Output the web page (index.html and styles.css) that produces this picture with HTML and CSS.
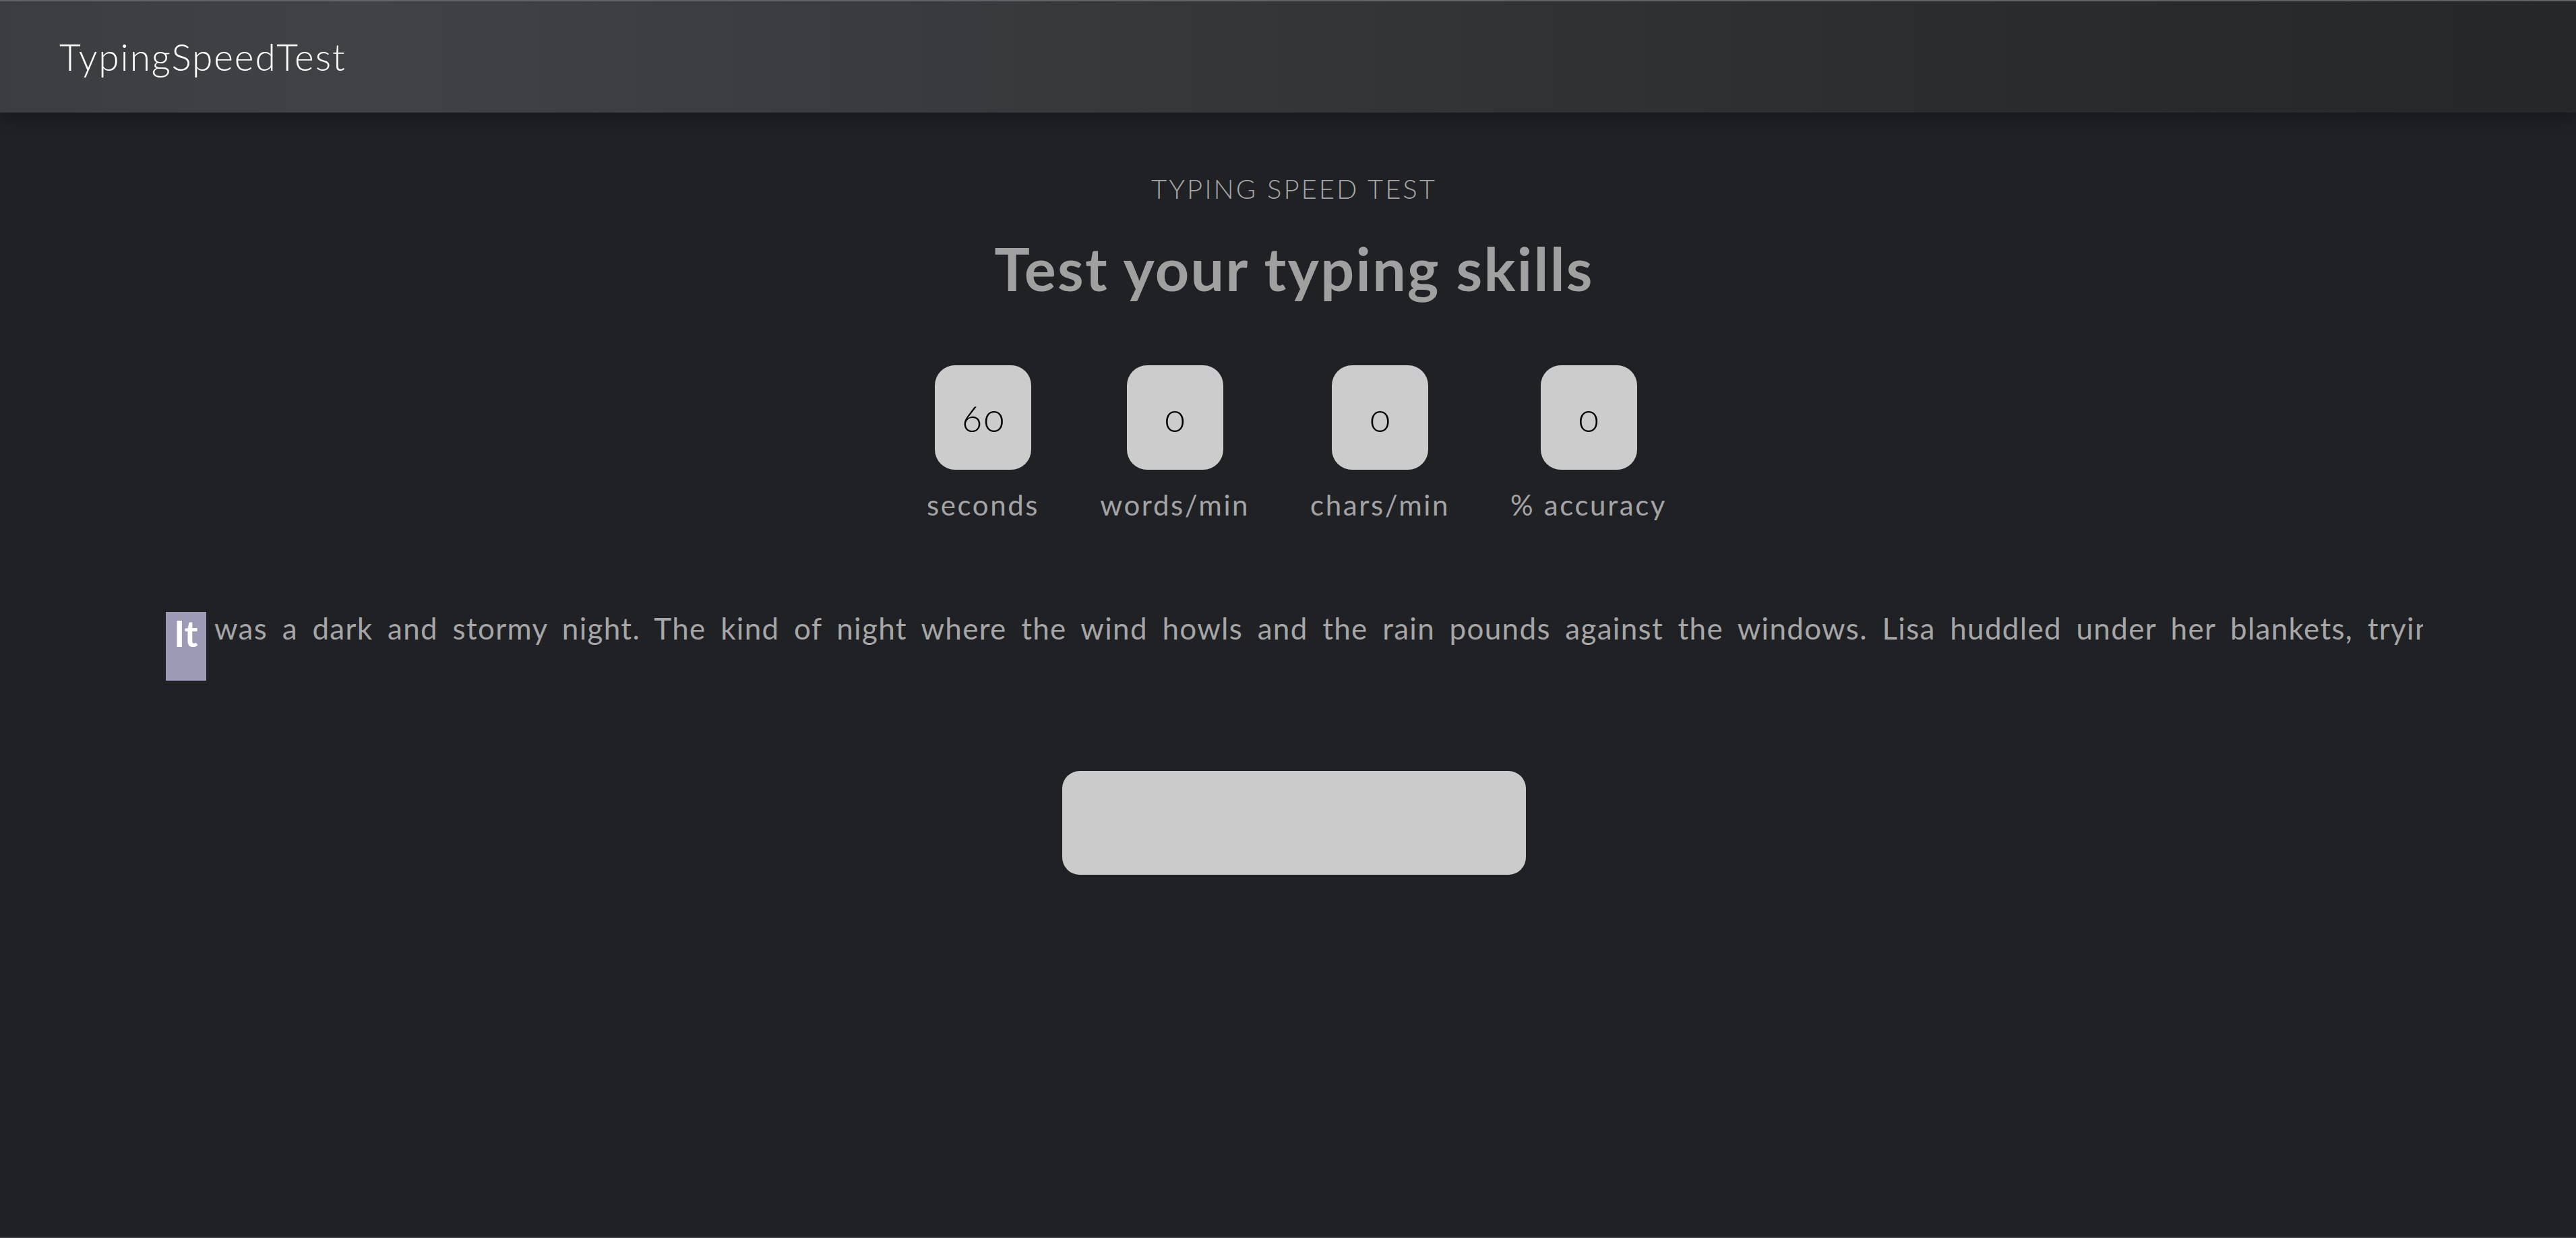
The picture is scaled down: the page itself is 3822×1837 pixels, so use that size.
FILE: index.html
```html
<!DOCTYPE html>
<html lang="en">
<head>
<meta charset="utf-8">
<title>TypingSpeedTest</title>
<link rel="stylesheet" href="styles.css">
</head>
<body>
<header class="navbar">
  <a class="brand" href="#">TypingSpeedTest</a>
</header>
<main class="main">
  <p class="eyebrow">TYPING SPEED TEST</p>
  <h1 class="title">Test your typing skills</h1>
  <div class="stats">
    <div class="stat">
      <div class="stat-box">60</div>
      <div class="stat-label">seconds</div>
    </div>
    <div class="stat">
      <div class="stat-box">0</div>
      <div class="stat-label">words/min</div>
    </div>
    <div class="stat">
      <div class="stat-box">0</div>
      <div class="stat-label">chars/min</div>
    </div>
    <div class="stat">
      <div class="stat-box">0</div>
      <div class="stat-label">% accuracy</div>
    </div>
  </div>
  <div class="passage">
    <span class="current">It</span>
    <span class="rest">was a dark and stormy night. The kind of night where the wind howls and the rain pounds against the windows. Lisa huddled under her blankets, trying to block out the noise and get some sleep.</span>
  </div>
  <button class="start" type="button"></button>
</main>
<div class="footer-line"></div>
</body>
</html>
```
FILE: styles.css
```css
* { box-sizing: border-box; }
html, body { margin: 0; padding: 0; }
body {
  min-height: 100vh;
  display: flex;
  flex-direction: column;
  background: #202125;
  font-family: Lato, "Open Sans", sans-serif;
  color: #a2a2a2;
}
.navbar {
  height: 167px;
  border-top: 2px solid #616166;
  display: flex;
  align-items: center;
  padding-left: 88px;
  background: linear-gradient(to right, #3c3d40 0%, #414245 14%, #3a3b3e 35%, #313234 60%, #2a2b2d 80%, #262729 100%);
  box-shadow: 0 6px 24px rgba(0, 0, 0, 0.35);
  position: relative;
  z-index: 1;
}
.brand {
  color: #ffffff;
  text-decoration: none;
  font-size: 55px;
  font-weight: 300;
  letter-spacing: 1.9px;
  line-height: 1.2;
  margin-top: -2px;
}
.main {
  flex: 1;
  display: flex;
  flex-direction: column;
  align-items: center;
  padding-left: 18px;
  padding-top: 89px;
}
.eyebrow {
  margin: 0;
  font-size: 40px;
  line-height: 48px;
  font-weight: 300;
  letter-spacing: 3px;
  color: #a6a6a6;
}
.title {
  margin: 42px 0 0;
  font-size: 88px;
  line-height: 1.2;
  font-weight: 700;
  letter-spacing: 2.3px;
  color: #a0a0a0;
}
.stats {
  margin-top: 90px;
  display: flex;
  gap: 90px;
  padding-left: 8px;
}
.stat {
  display: flex;
  flex-direction: column;
  align-items: center;
}
.stat-box {
  width: 143px;
  height: 155px;
  border-radius: 30px;
  background: #cccccc;
  color: #000000;
  display: flex;
  align-items: center;
  justify-content: center;
  font-size: 55px;
  font-weight: 300;
  letter-spacing: 3px;
  text-indent: 3px;
  font-variant-numeric: oldstyle-nums;
  padding-top: 2px;
}
.stat-label {
  margin-top: 27px;
  font-size: 42px;
  line-height: 1.2;
  letter-spacing: 2.6px;
  color: #a4a4a4;
}
.passage {
  align-self: stretch;
  margin: 134px 227px 0 228px;
  display: flex;
  align-items: flex-start;
  white-space: nowrap;
  overflow: hidden;
}
.current {
  flex: none;
  width: 60px;
  height: 102px;
  background: #9d9ab5;
  color: #ffffff;
  font-size: 54px;
  font-weight: 700;
  line-height: 1.2;
  text-align: center;
}
.rest {
  margin-left: 12px;
  margin-top: -2px;
  font-size: 44px;
  line-height: 1.2;
  letter-spacing: 1.3px;
  word-spacing: 9px;
  color: #a6a6a6;
}
.start {
  margin-top: 134px;
  width: 688px;
  height: 154px;
  border: none;
  border-radius: 26px;
  background: #cbcbcb;
  padding: 0;
}
.footer-line {
  height: 2px;
  background: #3b3c41;
}
```
